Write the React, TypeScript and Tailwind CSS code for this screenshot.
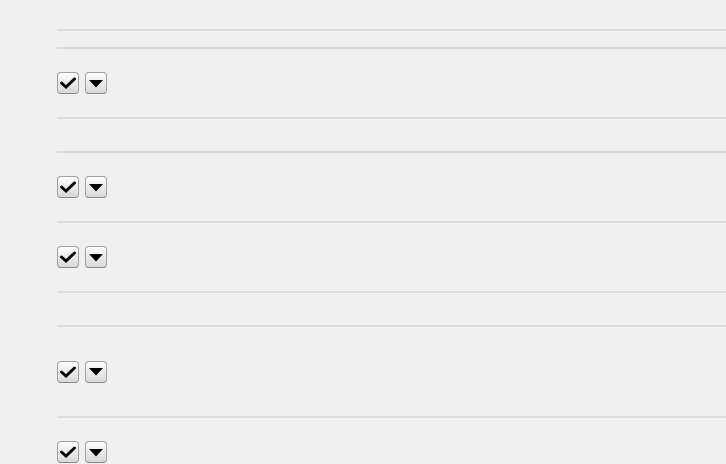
import React from "react";

type Row = { h: string; tools?: boolean };

// heights include the 2px top rule
const rows: Row[] = [
    { h: "h-[29px]" },
    { h: "h-[18px]" },
    { h: "h-[70px]", tools: true },
    { h: "h-[34px]" },
    { h: "h-[70px]", tools: true },
    { h: "h-[70px]", tools: true },
    { h: "h-[34px]" },
    { h: "h-[91px]", tools: true },
    { h: "h-[70px]", tools: true },
];

function ToolButton({ children }: { children: React.ReactNode }) {
    return (
        <button
            type="button"
            className="flex h-[22px] w-[22px] items-center justify-center rounded-[4px] border border-[#a0a0a0] border-b-[#8a8a8a] bg-gradient-to-b from-[#ffffff] to-[#d8d8d8] shadow-[inset_0_1px_0_#ffffff]"
        >
            {children}
        </button>
    );
}

function Tools() {
    return (
        <div className="flex items-center gap-[6px]">
            <ToolButton>
                <svg width="18" height="14" viewBox="0 0 18 14">
                    <path d="M2.5 7 L7 11 L15.5 3" fill="none" stroke="#000" strokeWidth="3" strokeLinecap="round" strokeLinejoin="miter" />
                </svg>
            </ToolButton>
            <ToolButton>
                <svg width="14" height="9" viewBox="0 0 14 9">
                    <path d="M0 1 L14 1 L7 8.5 Z" fill="#000" />
                </svg>
            </ToolButton>
        </div>
    );
}

export default function App() {
    return (
        <div className="h-[464px] w-[726px] overflow-hidden bg-[#f0f0f0] pl-[57px]">
            {rows.map((r, i) => (
                <div
                    key={i}
                    className={`${r.h} flex items-center ${i > 0 ? "border-t-2 border-[#dcdcdc]" : ""}`}
                >
                    {r.tools && <Tools />}
                </div>
            ))}
        </div>
    );
}
